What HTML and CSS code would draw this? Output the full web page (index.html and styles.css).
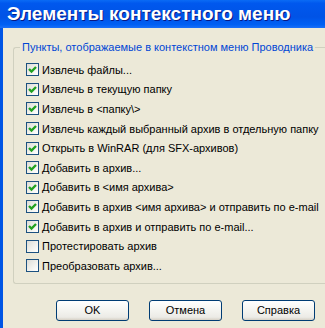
FILE: index.html
```html
<!DOCTYPE html>
<html lang="ru">
<head>
    <meta charset="UTF-8">
    <title>Элементы контекстного меню</title>
    <link rel="stylesheet" href="styles.css">
</head>
<body>
    <div class="window">
        <div class="titlebar">Элементы контекстного меню</div>
        <div class="frame">
            <fieldset class="groupbox">
                <legend>Пункты, отображаемые в контекстном меню Проводника</legend>
                <div class="item"><span class="box checked"></span>Извлечь файлы...</div>
                <div class="item"><span class="box checked"></span>Извлечь в текущую папку</div>
                <div class="item"><span class="box checked"></span>Извлечь в &lt;папку\&gt;</div>
                <div class="item"><span class="box checked"></span>Извлечь каждый выбранный архив в отдельную папку</div>
                <div class="item"><span class="box checked"></span>Открыть в WinRAR (для SFX-архивов)</div>
                <div class="item"><span class="box checked"></span>Добавить в архив...</div>
                <div class="item"><span class="box checked"></span>Добавить в &lt;имя архива&gt;</div>
                <div class="item"><span class="box checked"></span>Добавить в архив &lt;имя архива&gt; и отправить по e-mail</div>
                <div class="item"><span class="box checked"></span>Добавить в архив и отправить по e-mail...</div>
                <div class="item"><span class="box"></span>Протестировать архив</div>
                <div class="item"><span class="box"></span>Преобразовать архив...</div>
            </fieldset>
            <div class="buttons">
                <button class="btn">OK</button>
                <button class="btn">Отмена</button>
                <button class="btn">Справка</button>
            </div>
        </div>
    </div>
</body>
</html>
```

FILE: styles.css
```css
html, body {
    margin: 0;
    padding: 0;
    overflow: hidden;
}
body {
    background: #ECE9D8;
    font-family: "Liberation Sans", Arial, sans-serif;
    font-size: 11px;
    color: #000;
}
.window {
    width: 325px;
    height: 328px;
    display: flex;
    flex-direction: column;
    overflow: hidden;
}
.titlebar {
    height: 28px;
    flex: none;
    box-sizing: border-box;
    padding: 3px 0 0 7px;
    background: linear-gradient(#0A6BF5 0%, #0058EE 12%, #0053E6 60%, #0060F4 88%, #1A6FF8 100%);
    color: #fff;
    font-weight: bold;
    font-size: 19px;
    line-height: 22px;
    white-space: nowrap;
    text-shadow: 1px 1px 0 #0A1883;
}
.frame {
    flex: 1;
    border-left: 3px solid #0055E5;
    padding: 13px 0 0 10px;
    overflow: hidden;
}
.groupbox {
    width: 320px;
    margin: 0 -20px 0 0;
    padding: 6px 0 7px 6px;
    border: 1px solid #D0D0BF;
    border-right: none;
    border-radius: 3px 0 0 3px;
}
.groupbox legend {
    padding: 0 2px;
    color: #0046D5;
    line-height: 13px;
    white-space: nowrap;
}
.item {
    display: flex;
    align-items: center;
    height: 19.6px;
    padding-left: 6px;
    white-space: nowrap;
}
.box {
    width: 13px;
    height: 13px;
    box-sizing: border-box;
    border: 1px solid #1C5180;
    background: linear-gradient(135deg, #DCDCD7 0%, #F3F3EF 60%, #FFFFFF 100%);
    margin-right: 3px;
    flex: none;
}
.box.checked {
    background-image: url("data:image/svg+xml,%3Csvg xmlns='http://www.w3.org/2000/svg' width='11' height='11'%3E%3Cpath d='M2 5 L4.5 7.5 L9 3' fill='none' stroke='%2321A121' stroke-width='2.4'/%3E%3C/svg%3E"), linear-gradient(135deg, #DCDCD7 0%, #F3F3EF 60%, #FFFFFF 100%);
}
.buttons {
    display: flex;
    gap: 20px;
    margin: 16px 0 0 43px;
}
.btn {
    width: 73px;
    height: 21px;
    border: 1px solid #003C74;
    border-radius: 3px;
    background: linear-gradient(#FFFFFF 0%, #F4F4F0 50%, #ECEBE6 85%, #D6D0C5 100%);
    font-family: inherit;
    font-size: 11px;
    color: #000;
    padding: 0;
}
```
